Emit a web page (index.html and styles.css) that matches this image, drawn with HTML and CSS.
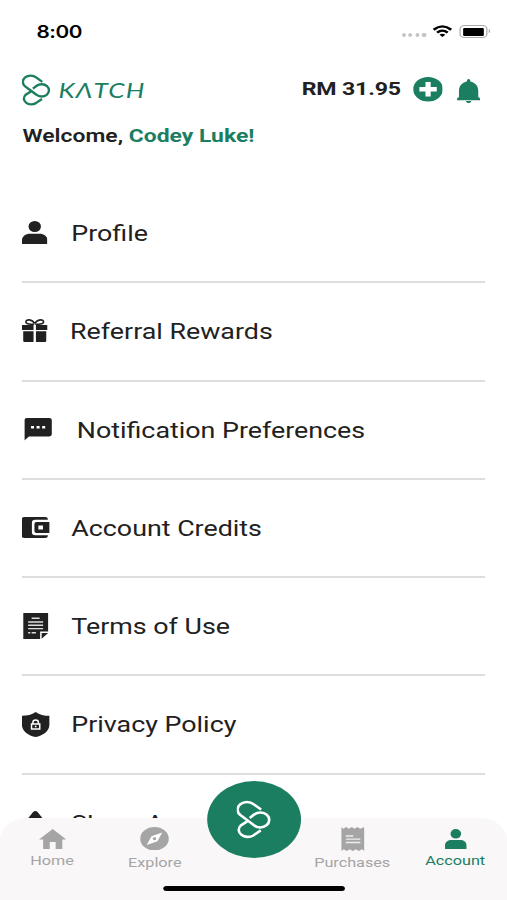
FILE: index.html
```html
<!DOCTYPE html>
<html lang="en">
<head>
<meta charset="utf-8">
<title>Katch Account</title>
<link rel="stylesheet" href="styles.css">
</head>
<body>
<svg class="defs" width="0" height="0">
  <symbol id="mark" viewBox="109 73 107 122" preserveAspectRatio="none">
    <path d="M185 103L162 86A28 23 0 0 0 121 120L163 152A27.500 23.500 0 1 0 164 118L150 129M142 140L122 153A28 22 0 0 0 161 184L184 168" fill="none" stroke="currentColor"/>
  </symbol>
  <symbol id="person" viewBox="0 0 26 23" preserveAspectRatio="none">
    <ellipse cx="13" cy="5.5" rx="6.3" ry="5.5"/><path d="M0 23V19.5C0 15 4 12.7 8 12.7H18C22 12.7 26 15 26 19.5V23Z"/>
  </symbol>
</svg>
<main class="screen">
  <div class="status">
    <span class="time">8:00</span>
    <span class="dots"><i></i><i></i><i></i><i></i></span>
    <svg class="wifi" viewBox="0 0 20 14" preserveAspectRatio="none"><path d="M0 4.5Q10-4.2 20 4.5L18 6.6Q10-.5 2 6.6ZM3.6 8Q10 2.3 16.4 8L14.5 10Q10 6 5.5 10ZM7 11.3Q10 9 13 11.3L10 14Z"/></svg>
    <span class="battery"><i></i></span>
    <span class="cap"></span>
  </div>
  <header class="header">
    <svg class="brand-mark"><use href="#mark"/></svg>
    <span class="brand">KΛTCH</span>
    <span class="balance">RM 31.95</span>
    <svg class="plus" viewBox="0 0 24 24"><circle cx="12" cy="12" r="12"/><path d="M12 5V19M5 12H19" stroke="#fff" stroke-width="4.2"/></svg>
    <svg class="bell" viewBox="0 0 24 24" preserveAspectRatio="none"><path d="M12 0C13.3 0 13.8 1 13.8 2.5C19 3.5 22 7 22 12V18L24 19.5V21.2H0V19.5L2 18V12C2 7 5 3.5 10.2 2.5C10.2 1 10.7 0 12 0ZM9.3 22H14.7C14.5 23.4 13.4 24 12 24S9.5 23.4 9.3 22Z"/></svg>
  </header>
  <p class="welcome">Welcome, <b>Codey Luke!</b></p>
  <ul class="menu">
    <li><svg class="i-person"><use href="#person"/></svg><span>Profile</span></li>
    <li><svg class="i-gift" viewBox="0 0 26 23" preserveAspectRatio="none"><path d="M0 6H11.8V11H0ZM14.2 6H26V11H14.2ZM1.3 12.2H11.8V23H2.5Q1.3 23 1.3 21.8ZM14.2 12.2H24.7V21.8Q24.7 23 23.5 23H14.2Z"/><path d="M12.5 5C10 5.6 4 5.2 4 3C4 0 10.5-.2 12.8 4.5M13.5 5C16 5.6 22 5.2 22 3C22 0 15.5-.2 13.2 4.5" fill="none" stroke="currentColor" stroke-width="1.6"/></svg><span>Referral Rewards</span></li>
    <li><svg class="i-chat" viewBox="0 0 27 22" preserveAspectRatio="none"><path d="M2.5 0H24.5Q27 0 27 2V16Q27 18 24.5 18H4.5L0 22V2Q0 0 2.5 0Z"/><path d="M6.5 7.8H9.5V10.2H6.5ZM12 7.8H15V10.2H12ZM17.5 7.8H20.5V10.2H17.5Z" fill="#fff"/></svg><span>Notification Preferences</span></li>
    <li><svg class="i-wallet" viewBox="0 0 27 22" preserveAspectRatio="none"><path d="M2.5 0H23Q25.5 0 25.5 2V3H13Q9.8 3 9.8 6V16Q9.8 19 13 19H25.5V20Q25.5 22 23 22H2.5Q0 22 0 20V2Q0 0 2.5 0Z"/><path d="M14.5 5.2H27V16.8H14.5Q12.3 16.8 12.3 15V7Q12.3 5.2 14.5 5.2ZM16.2 9V13H20.7V9Z" fill-rule="evenodd"/></svg><span>Account Credits</span></li>
    <li><svg class="i-terms" viewBox="0 0 25 26" preserveAspectRatio="none"><path d="M0 0H25V18.500H17V26H0ZM18.500 20H25L18.500 25.800Z"/><path d="M8.5 5.2H16.5M5 9H20M5 12.3H20M5 15.6H20M5 19.8H7.2M8.5 19.8H12.8" stroke="#ddd" stroke-width="1.4"/></svg><span>Terms of Use</span></li>
    <li><svg class="i-shield" viewBox="0 0 28 25" preserveAspectRatio="none"><path d="M14 0C18 3 22.5 3.8 28 3.8V13C28 19 21 24 14 25C7 24 0 19 0 13V3.8C5.500 3.800 10 3 14 0Z"/><path d="M9.800 12H18.200V17H9.800ZM11.200 11.500V10.500C11.200 7.200 16.800 7.200 16.800 10.500V11.500" fill="none" stroke="#fff" stroke-width="1.5"/><path d="M13.200 13.700H14.800V15.300H13.200Z" fill="#fff"/></svg><span>Privacy Policy</span></li>
    <li><svg class="i-share" viewBox="0 0 22 24" preserveAspectRatio="none"><path d="M11 1Q12 1 13 2L20 12H14V24H8V12H2L9 2Q10 1 11 1Z"/></svg><span>Share App</span></li>
  </ul>
  <nav class="tabs">
    <a class="tab home"><svg viewBox="0 0 28 20" preserveAspectRatio="none"><path d="M14 0L28 10.500H23.800V20H17V13H11V20H4.200V10.500H0Z"/></svg><span>Home</span></a>
    <a class="tab explore"><svg viewBox="0 0 24 24"><circle cx="12" cy="12" r="12"/><path d="M18.500 5.500L14.500 14.500L5.500 18.500L9.500 9.500Z" fill="#fff"/><circle cx="12" cy="12" r="1.500"/></svg><span>Explore</span></a>
    <a class="tab purchases"><svg viewBox="0 0 23 24" preserveAspectRatio="none"><path d="M0 0L2 1.800L4.800 0L7.600 1.800L10.400 0L13.200 1.800L16 0L18.800 1.800L23 0V24L20.500 22.200L17.500 24L14.500 22.200L11.500 24L8.500 22.200L5.500 24L2.500 22.200L0 24Z"/><path d="M4.500 9H12M4.500 12.200H19M4.500 15.500H19" stroke="#eee" stroke-width="1.300"/></svg><span>Purchases</span></a>
    <a class="tab account"><svg><use href="#person"/></svg><span>Account</span></a>
    <a class="fab"><svg><use href="#mark"/></svg></a>
    <div class="indicator"></div>
  </nav>
</main>
</body>
</html>
```
FILE: styles.css
```css
* { box-sizing: border-box; }
body { margin: 0; background: #fff; overflow: hidden; }
.defs { position: absolute; }
/* The 416px layout is widened to fill the 507px viewport. */
.screen {
  position: relative;
  width: 416px;
  height: 900px;
  overflow: hidden;
  transform: scaleX(1.21875);
  transform-origin: 0 0;
  font-family: Roboto, sans-serif;
  color: #212121;
}
svg { display: block; fill: currentColor; flex: none; }
.status { display: flex; height: 62px; padding-left: 30px; color: #000; }
.time { width: 299.500px; padding-top: 22px; font: 600 17px/20px Inter, sans-serif; letter-spacing: -.4px; }
.dots { display: flex; gap: 2.200px; width: 25.500px; padding-top: 33px; }
.dots i { width: 3.400px; height: 4px; border-radius: 50%; background: #c4c4c4; }
.wifi { width: 16px; height: 12px; margin-top: 25px; }
.battery { width: 23px; height: 13px; margin: 25px 0 0 6px; padding: 1.500px 2px; border: 1px solid #aaa; border-radius: 4px; }
.battery i { display: block; height: 8px; background: #000; border-radius: 1px; }
.cap { width: 1.500px; height: 4px; margin: 29px 0 0 .5px; background: #aaa; border-radius: 0 2px 2px 0; }
.header { display: flex; height: 57px; padding-left: 18px; color: #1b7e61; }
.brand-mark { width: 23.500px; height: 32px; margin-top: 12px; stroke-width: 9px; }
.brand { width: 199.500px; margin-left: 6.500px; padding-top: 16px; font: italic 400 21.500px/24px Lato, sans-serif; letter-spacing: .9px; }
.balance { width: 91px; padding-top: 15px; color: #212121; font-weight: 700; font-size: 19px; line-height: 24px; letter-spacing: -.15px; white-space: nowrap; }
.plus { width: 24.500px; height: 24.500px; margin-top: 15px; }
.bell { width: 19px; height: 24px; margin: 17px 0 0 11.500px; }
.welcome { margin: 0; padding-left: 18.500px; height: 66px; padding-top: 5px; font-size: 18.800px; line-height: 24px; font-weight: 600; }
.welcome b { color: #1b7e61; font-weight: 700; }
.menu { margin: 0; padding: 0 18px; list-style: none; }
.menu li { display: flex; align-items: center; height: 98.250px; border-bottom: 2px solid #dedede; font-size: 22px; line-height: 28px; white-space: nowrap; }
.menu span { margin-left: auto; width: 339.500px; padding-top: 2px; }
.i-person, .i-gift { width: 21px; height: 23px; margin-bottom: 1.500px; }
.i-chat { width: 22.500px; height: 22.500px; margin-left: 2px; }
.i-wallet { width: 22.500px; height: 21px; }
.i-terms { width: 20.500px; height: 26px; margin-left: 1px; }
.i-shield { width: 22.500px; height: 25px; }
.i-share { width: 22px; height: 26px; }
.menu li:nth-child(2) span { width: 340.500px; }
.menu li:nth-child(3) span { width: 335px; }
.tabs { position: absolute; left: 0; right: 0; bottom: 0; height: 82.500px; display: flex; background: #f9f7f8; border-radius: 22px 22px 0 0; color: #a5a5a5; }
.tab { display: flex; flex-direction: column; align-items: center; font-size: 13.300px; line-height: 18px; }
.home { width: 85.500px; }
.home svg { width: 22.500px; height: 20px; margin: 11px 0 3px; }
.explore { width: 83px; }
.explore svg { width: 23.500px; height: 23.500px; margin: 9px 0 3.500px; }
.purchases { width: 84px; margin-left: 78.500px; }
.purchases svg { width: 19px; height: 24px; margin: 9px 0 3px; }
.account { width: 85px; color: #1b7e61; }
.account svg { width: 18px; height: 20px; margin: 11px 0 3px; }
.fab { position: absolute; left: 170px; top: -36.500px; width: 77px; height: 77px; display: grid; place-items: center; border-radius: 50%; background: #1b7e61; color: #fff; }
.fab svg { width: 28.500px; height: 39px; stroke-width: 8px; }
.indicator { position: absolute; left: 134px; bottom: 9px; width: 149px; height: 5.500px; border-radius: 3px; background: #000; }
```
